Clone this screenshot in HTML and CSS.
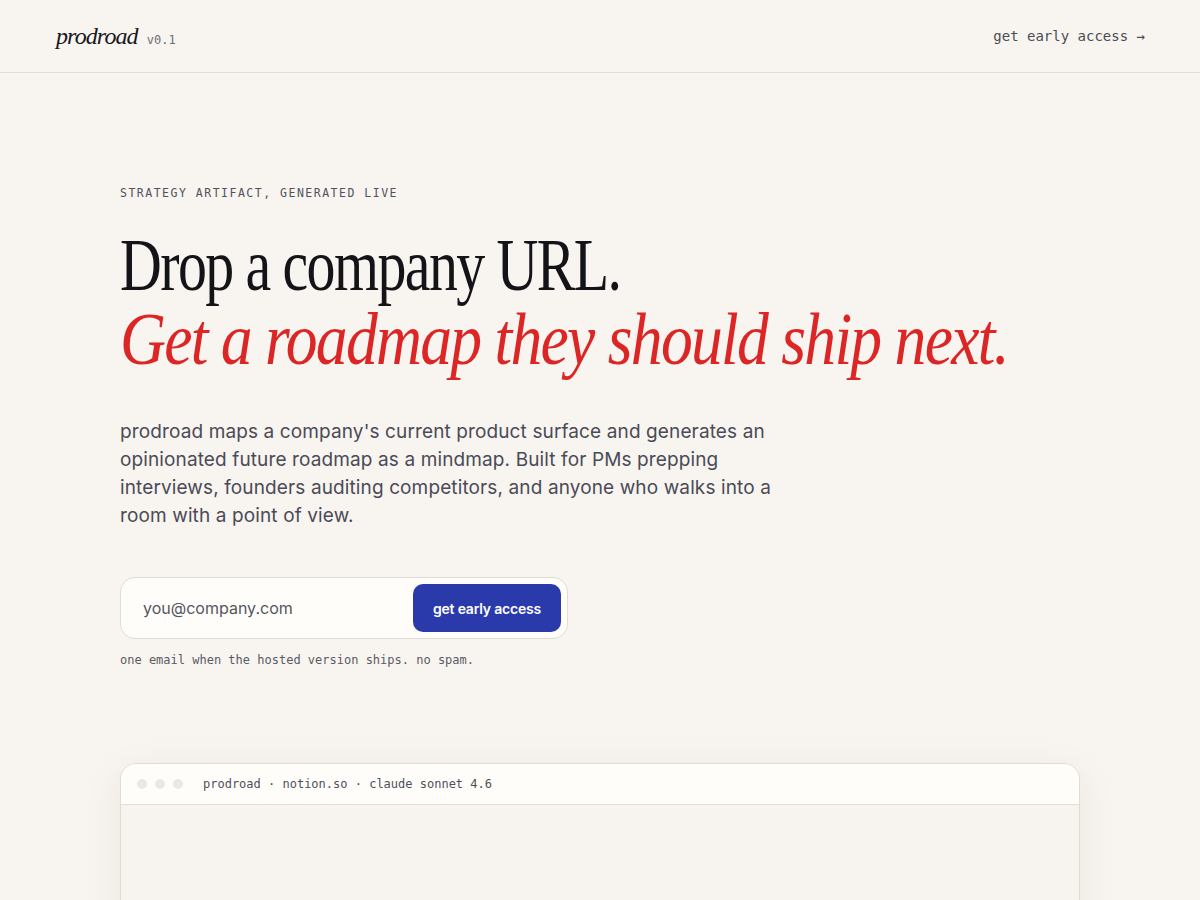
FILE: index.html
```html
<!DOCTYPE html>
<html lang="en">
<head>
<meta charset="utf-8">
<title>prodroad</title>
<link rel="stylesheet" href="styles.css">
</head>
<body>
<header class="topbar">
  <div class="brand">
    <span class="logo">prodroad</span>
    <span class="version">v0.1</span>
  </div>
  <a class="nav-cta" href="#">get early access →</a>
</header>
<main class="hero">
  <p class="eyebrow">STRATEGY ARTIFACT, GENERATED LIVE</p>
  <h1 class="headline">
    <span class="line line-dark">Drop a company URL.</span>
    <span class="line line-red">Get a roadmap they should ship next.</span>
  </h1>
  <p class="lede">prodroad maps a company's current product surface and generates an opinionated future roadmap as a mindmap. Built for PMs prepping interviews, founders auditing competitors, and anyone who walks into a room with a point of view.</p>
  <form class="signup">
    <input class="email" type="email" placeholder="you@company.com">
    <button class="submit" type="button">get early access</button>
  </form>
  <p class="fineprint">one email when the hosted version ships. no spam.</p>
  <section class="window">
    <div class="window-bar">
      <span class="dots"><i></i><i></i><i></i></span>
      <span class="window-title">prodroad · notion.so · claude sonnet 4.6</span>
    </div>
    <div class="window-body"></div>
  </section>
</main>
</body>
</html>
```
FILE: styles.css
```css
* { box-sizing: border-box; }
html, body { margin: 0; padding: 0; }
body {
  background: #f8f4ef;
  color: #17171c;
  font-family: Inter, "Liberation Sans", sans-serif;
  overflow: hidden;
  height: 900px;
}
.topbar {
  height: 73px;
  border-bottom: 1px solid #e2ddd6;
  display: flex;
  align-items: center;
  justify-content: space-between;
  padding: 0 55px 0 56px;
}
.brand { display: flex; align-items: baseline; gap: 9px; }
.logo {
  font-family: "Liberation Serif", serif;
  font-style: italic;
  font-size: 24px;
  color: #17171c;
  letter-spacing: -0.9px;
}
.version {
  font-family: "DejaVu Sans Mono", "Liberation Mono", monospace;
  font-size: 12px;
  color: #6d6e78;
}
.nav-cta {
  font-family: "DejaVu Sans Mono", "Liberation Mono", monospace;
  font-size: 14px;
  color: #4b4c56;
  text-decoration: none;
}
.hero { padding: 113px 120px 0; }
.eyebrow {
  margin: 0;
  font-family: "DejaVu Sans Mono", "Liberation Mono", monospace;
  font-size: 11.5px;
  letter-spacing: 1.5px;
  color: #50525e;
  line-height: 14px;
}
.headline {
  margin: 29px 0 0;
  font-family: "Liberation Serif", serif;
  font-weight: 400;
  font-size: 73px;
  line-height: 74px;
  letter-spacing: -2px;
}
.line { display: block; transform-origin: left center; white-space: nowrap; }
.line-dark { color: #131318; transform: scaleX(0.793); }
.line-red { color: #dc2626; font-style: italic; transform: scaleX(0.872); }
.lede {
  margin: 41px 0 0;
  max-width: 670px;
  font-size: 19px;
  line-height: 28px;
  letter-spacing: 0.12px;
  color: #4a4b57;
}
.signup {
  margin-top: 47px;
  width: 448px;
  height: 62px;
  background: #fffdf9;
  border: 1px solid #e2dcd4;
  border-radius: 15px;
  display: flex;
  align-items: center;
  padding: 0 6px 0 22px;
}
.email {
  flex: 1;
  border: 0;
  background: transparent;
  font-family: Inter, "Liberation Sans", sans-serif;
  font-size: 16px;
  color: #333;
  outline: none;
  padding: 0;
}
.email::placeholder { color: #55565f; }
.submit {
  width: 148px;
  height: 48px;
  border: 0;
  border-radius: 10px;
  background: #2b3aab;
  color: #fff;
  font-family: Inter, "Liberation Sans", sans-serif;
  font-size: 14px;
  font-weight: 600;
  letter-spacing: -0.2px;
}
.fineprint {
  margin: 14px 0 0;
  font-family: "DejaVu Sans Mono", "Liberation Mono", monospace;
  font-size: 12px;
  color: #5a5b66;
}
.window {
  margin-top: 96px;
  width: 960px;
  height: 400px;
  border: 1px solid #e0dbd3;
  border-radius: 16px;
  overflow: hidden;
  background: #f7f3ee;
  box-shadow: 0 10px 40px rgba(60, 40, 20, 0.07);
}
.window-bar {
  height: 41px;
  background: #fffdf9;
  border-bottom: 1px solid #e2ddd6;
  display: flex;
  align-items: center;
  padding: 0 16px;
  gap: 20px;
}
.dots { display: flex; gap: 8px; }
.dots i {
  width: 10px; height: 10px; border-radius: 50%;
  background: #ebe9e7; display: block;
}
.window-title {
  font-family: "DejaVu Sans Mono", "Liberation Mono", monospace;
  font-size: 12px;
  color: #4f505b;
}
.window-body { height: 360px; }
```
